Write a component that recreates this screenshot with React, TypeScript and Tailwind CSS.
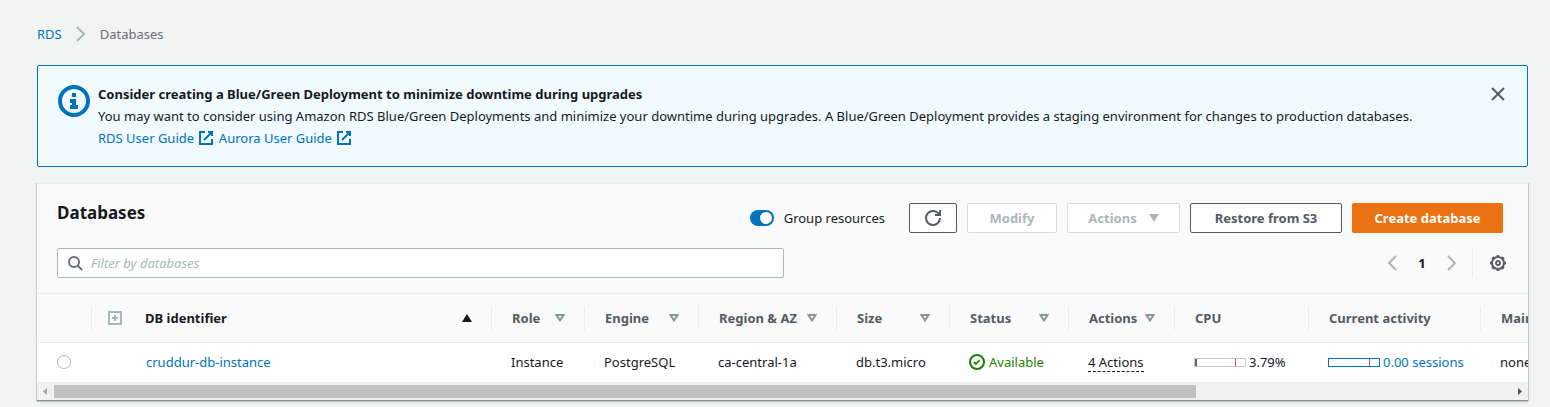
import React from "react";

type IconProps = { className?: string; children?: React.ReactNode };

const Icon = ({ className = "size-4", children }: IconProps) => (
  <svg viewBox="0 0 16 16" fill="none" stroke="currentColor" strokeWidth="2" className={className} aria-hidden="true">
    {children}
  </svg>
);

const ExternalIcon = () => (
  <Icon className="mx-px inline-block size-4 align-[-3px]">
    <path d="M10 2h4v4M6 10l8-8M14 9.05V14H2V2h5" />
  </Icon>
);

type SortState = "asc" | "none" | null;

const SortIcon = ({ state }: { state: SortState }) => {
  if (!state) return null;
  return (
    <svg viewBox="0 0 10 8" className={state === "asc" ? "h-2 w-2.5 text-[#16191f]" : "h-2 w-2.5 text-[#879596]"} aria-hidden="true">
      {state === "asc" ? (
        <path d="M5 0L10 8H0z" fill="currentColor" />
      ) : (
        <path d="M1.5 1h7L5 6.5z" fill="none" stroke="currentColor" strokeWidth="2" />
      )}
    </svg>
  );
};

type Column = { label: string; width: string; sort: SortState };

const columns: Column[] = [
  { label: "Role", width: "w-[93px]", sort: "none" },
  { label: "Engine", width: "w-[114px]", sort: "none" },
  { label: "Region & AZ", width: "w-[138px]", sort: "none" },
  { label: "Size", width: "w-[113px]", sort: "none" },
  { label: "Status", width: "w-[119px]", sort: "none" },
  { label: "Actions", width: "w-[106px]", sort: "none" },
  { label: "CPU", width: "w-[134px]", sort: null },
  { label: "Current activity", width: "w-[172px]", sort: null },
  { label: "Maintenance", width: "w-[140px]", sort: null },
];

const Divider = () => <span className="absolute top-3 right-0 h-6 w-px bg-[#eaeded]" />;

const Meter = ({ value, border }: { value: number; border: string }) => (
  <span className={`relative inline-block h-[9px] w-[52px] shrink-0 border bg-white ${border}`}>
    <span className="absolute inset-y-0 left-0 bg-[#4a6a85]" style={{ width: `${value}%` }} />
    <span className="absolute inset-y-0 left-4/5 w-px bg-[#d9534f]" />
  </span>
);

const buttonBase = "flex h-[30px] items-center justify-center rounded-[2px] border bg-white text-[13px] font-bold";

export default function App() {
  return (
    <div className="min-h-screen overflow-hidden bg-[#f2f3f3] pr-[22px] pl-[37px] font-['Noto_Sans',sans-serif] text-[13px] leading-[22px] text-[#16191f]">
      <nav aria-label="Breadcrumb" className="flex items-center pt-[23px]">
        <a href="#rds" className="text-[#0073bb]">RDS</a>
        <Icon className="mx-[11px] size-4 text-[#aab7b8]">
          <path d="M4 1l7 7-7 7" />
        </Icon>
        <span className="text-[#687078]">Databases</span>
      </nav>

      <section className="mt-5 flex items-start rounded-[2px] border border-[#0073bb] bg-[#f1faff] px-5 py-[17px]">
        <Icon className="mt-0.5 mr-2 size-8 shrink-0 text-[#0073bb]">
          <circle cx="8" cy="8" r="7" />
          <path d="M8 11V8H6M10 11H6M8 6V4" />
        </Icon>
        <div className="min-w-0 flex-1">
          <h2 className="font-bold">Consider creating a Blue/Green Deployment to minimize downtime during upgrades</h2>
          <p>
            You may want to consider using Amazon RDS Blue/Green Deployments and minimize your downtime during upgrades. A Blue/Green Deployment provides a staging environment for changes to production databases.
          </p>
          <p className="text-[#0073bb]">
            <a href="#rds-guide">RDS User Guide <ExternalIcon /></a>{" "}
            <a href="#aurora-guide">Aurora User Guide <ExternalIcon /></a>
          </p>
        </div>
        <button type="button" aria-label="Dismiss" className="mt-[3px] mr-px text-[#545b64]">
          <Icon><path d="M2 2l12 12M14 2L2 14" /></Icon>
        </button>
      </section>

      <section className="mt-4 border-t border-b border-t-[#eaeded] border-b-[#879596] bg-[#fafafa] shadow-[0_1px_1px_0_rgba(0,28,36,0.2),1px_0_0_0_#c8cfcf,-1px_0_0_0_#c8cfcf]">
        <div className="flex items-start justify-between pt-[19px] pr-[25px] pl-5">
          <h1 className="text-[17px] leading-5 font-bold">Databases</h1>
          <div className="flex items-center gap-2.5">
            <label className="mr-3.5 flex items-center gap-2.5">
              <input type="checkbox" role="switch" defaultChecked className="peer sr-only" />
              <span className="flex h-4 w-6 items-center justify-end rounded-full bg-[#0073bb] px-0.5">
                <span className="size-3 rounded-full bg-white" />
              </span>
              Group resources
            </label>
            <button type="button" aria-label="Refresh" className={`${buttonBase} w-12 border-[#545b64] text-[#545b64]`}>
              <Icon>
                <path d="M15 8c0 3.87-3.13 7-7 7s-7-3.13-7-7 3.13-7 7-7c2.79 0 5.2 1.63 6.33 4" />
                <path d="M10 5h5V0" />
              </Icon>
            </button>
            <button type="button" disabled className={`${buttonBase} w-[90px] border-[#d5dbdb] text-[#aab7b8]`}>Modify</button>
            <button type="button" disabled className={`${buttonBase} w-[113px] gap-3 border-[#d5dbdb] text-[#aab7b8]`}>
              Actions
              <svg viewBox="0 0 10 8" className="h-2 w-2.5" aria-hidden="true"><path d="M0 0h10L5 8z" fill="currentColor" /></svg>
            </button>
            <button type="button" className={`${buttonBase} w-[152px] border-[#545b64] text-[#545b64]`}>Restore from S3</button>
            <button type="button" className="flex h-[30px] w-[151px] items-center justify-center rounded-[2px] bg-[#ec7211] text-[13px] font-bold text-white">Create database</button>
          </div>
        </div>

        <div className="my-[15px] flex items-center justify-between pr-[22px] pl-5">
          <label className="flex h-[30px] w-[50.2%] items-center gap-2 rounded-[2px] border border-[#aab7b8] bg-white px-[9px]">
            <Icon className="size-4 shrink-0 text-[#687078]">
              <circle cx="7" cy="7" r="5" />
              <path d="M15 15l-4.5-4.5" />
            </Icon>
            <input type="search" aria-label="Filter by databases" placeholder="Filter by databases" className="min-w-0 flex-1 bg-transparent italic outline-none placeholder:text-[#aab7b8]" />
          </label>
          <div className="flex h-[30px] items-center text-[#aab7b8]">
            <button type="button" aria-label="Previous page"><Icon><path d="M11 1L4 8l7 7" /></Icon></button>
            <span className="w-[42px] text-center font-bold text-[#16191f]">1</span>
            <button type="button" aria-label="Next page"><Icon><path d="M5 1l7 7-7 7" /></Icon></button>
            <span className="mr-[17px] ml-[13px] h-[30px] w-px bg-[#eaeded]" />
            <button type="button" aria-label="Preferences" className="text-[#545b64]">
              <Icon>
                <circle cx="8" cy="8" r="6" />
                <circle cx="8" cy="8" r="7.3" strokeWidth="1.4" pathLength="16" strokeDasharray="1 1" strokeDashoffset="0.5" />
                <circle cx="8" cy="8" r="2" strokeWidth="1.8" />
              </Icon>
            </button>
          </div>
        </div>

        <div className="overflow-hidden border-t border-[#eaeded]">
          <table className="w-[1584px] table-fixed border-collapse text-left whitespace-nowrap">
            <thead>
              <tr className="h-12 border-b border-[#eaeded] text-[#545b64]">
                <th className="relative w-[55px] p-0">
                  <Divider />
                </th>
                <th className="w-[37px] p-0 pl-4">
                  <button type="button" aria-label="Expand all" className="flex text-[#aab7b8]">
                    <svg viewBox="0 0 14 14" className="size-3.5" fill="none" stroke="currentColor" aria-hidden="true">
                      <path d="M1 1h12v12H1z" strokeWidth="2" />
                      <path d="M7 4v6M4 7h6" strokeWidth="2" />
                    </svg>
                  </button>
                </th>
                <th className="relative w-[363px] py-0 pr-5 pl-4 text-[#16191f]">
                  <span className="flex items-center justify-between">DB identifier <SortIcon state="asc" /></span>
                  <Divider />
                </th>
                {columns.map((c) => (
                  <th key={c.label} className={`relative px-5 py-0 ${c.width}`}>
                    <span className="flex items-center justify-between">{c.label} <SortIcon state={c.sort} /></span>
                    <Divider />
                  </th>
                ))}
              </tr>
            </thead>
            <tbody>
              <tr className="h-10 border-b border-[#eaeded] bg-white">
                <td className="p-0 pl-5">
                  <input type="radio" name="db" aria-label="Select cruddur-db-instance" className="block size-3.5 appearance-none rounded-full border border-[#aab7b8] bg-white" />
                </td>
                <td className="p-0" />
                <td className="p-0 pl-[17px]"><a href="#cruddur-db-instance" className="text-[#0073bb]">cruddur-db-instance</a></td>
                <td className="p-0 pl-[19px]">Instance</td>
                <td className="p-0 pl-[19px]">PostgreSQL</td>
                <td className="p-0 pl-[19px]">ca-central-1a</td>
                <td className="p-0 pl-[19px]">db.t3.micro</td>
                <td className="p-0 pl-[19px]">
                  <span className="flex items-center gap-1 text-[#1d8102]">
                    <Icon>
                      <circle cx="8" cy="8" r="7" />
                      <path d="M5 8l2 2 3.500-4" strokeWidth="1.8" />
                    </Icon>
                    Available
                  </span>
                </td>
                <td className="p-0 pl-[19px]"><span className="border-b border-dashed border-[#16191f]">4 Actions</span></td>
                <td className="p-0 pl-[19px]">
                  <span className="flex items-center gap-[3px]"><Meter value={3.79} border="border-[#c8c8c8]" />3.79%</span>
                </td>
                <td className="p-0 pl-[19px]">
                  <a href="#sessions" className="flex items-center gap-[3px] text-[#0073bb]"><Meter value={0} border="border-[#0073bb]" />0.00 sessions</a>
                </td>
                <td className="p-0 pl-[19px]">none</td>
              </tr>
            </tbody>
          </table>
        </div>

        <div className="flex h-[17px] items-center justify-between bg-[#f1f1f1]" aria-hidden="true">
          <svg viewBox="0 0 17 17" className="size-[17px]"><path d="M10 5v7L6 8.500z" fill="#a3a3a3" /></svg>
          <div className="h-[13px] flex-1"><div className="h-full w-[78.4%] bg-[#c1c1c1]" /></div>
          <svg viewBox="0 0 17 17" className="size-[17px]"><path d="M7 5v7l4-3.500z" fill="#505050" /></svg>
        </div>
      </section>
    </div>
  );
}
